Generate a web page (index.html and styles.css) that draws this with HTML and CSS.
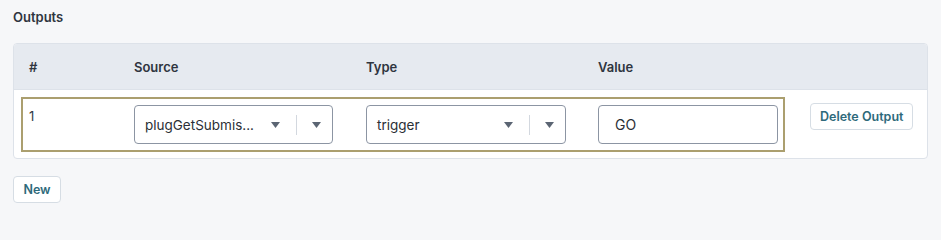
FILE: index.html
```html
<!DOCTYPE html>
<html>
<head>
<meta charset="utf-8">
<link rel="stylesheet" href="styles.css">
</head>
<body>
<div class="page">
  <h2 class="title">Outputs</h2>
  <div class="card">
    <div class="head">
      <div class="hcell">#</div>
      <div class="hcell">Source</div>
      <div class="hcell">Type</div>
      <div class="hcell">Value</div>
    </div>
    <div class="body">
      <div class="row">
        <div class="idx">1</div>
        <div class="select">
          <span class="sel-text">plugGetSubmis...</span>
          <svg class="arrow a1" width="9" height="6" viewBox="0 0 9 6"><path d="M0 0H9L4.5 6Z" fill="#5b6573"/></svg>
          <span class="sep"></span>
          <span class="drop"><svg class="arrow" width="9" height="6" viewBox="0 0 9 6"><path d="M0 0H9L4.5 6Z" fill="#5b6573"/></svg></span>
        </div>
        <div class="select">
          <span class="sel-text">trigger</span>
          <svg class="arrow a1" width="9" height="6" viewBox="0 0 9 6"><path d="M0 0H9L4.5 6Z" fill="#5b6573"/></svg>
          <span class="sep"></span>
          <span class="drop"><svg class="arrow" width="9" height="6" viewBox="0 0 9 6"><path d="M0 0H9L4.5 6Z" fill="#5b6573"/></svg></span>
        </div>
        <div class="input">GO</div>
      </div>
      <button class="btn del">Delete Output</button>
    </div>
  </div>
  <button class="btn new">New</button>
</div>
</body>
</html>
```

FILE: styles.css
```css
* { box-sizing: border-box; }
html, body { margin: 0; padding: 0; }
body {
  background: #f6f7f9;
  font-family: Inter, "Noto Sans", sans-serif;
  color: #2d3440;
  width: 941px;
  height: 219px;
  overflow: hidden;
}
.page {
  padding: 7px 13px 0 13px;
}
.title {
  margin: 0;
  font-size: 13px;
  font-weight: 600;
  line-height: 20px;
  color: #2f3540;
}
.card {
  margin-top: 16px;
  width: 915px;
  background: #fff;
  border: 1px solid #dde2e9;
  border-radius: 4px;
  overflow: hidden;
}
.head {
  display: grid;
  grid-template-columns: 105px 232px 232px 180px;
  height: 46px;
  align-items: center;
  padding-left: 15px;
  background: #e6eaf0;
  border-bottom: 1px solid #dde2e9;
}
.hcell {
  font-size: 13px;
  font-weight: 600;
  color: #2f3540;
}
.body {
  display: flex;
  align-items: flex-start;
  padding: 7px 0 6px 7px;
}
.row {
  display: grid;
  grid-template-columns: 105px 232px 232px 180px;
  padding: 6px 5px 6px 6px;
  border: 2px solid #ab9f6f;
}
.idx {
  font-size: 13px;
  line-height: 20px;
  padding-top: 1px;
  color: #333a44;
}
.select {
  display: flex;
  align-items: center;
  width: 199px;
  height: 39px;
  border: 1px solid #8c95a3;
  border-radius: 4px;
  padding-left: 10px;
  background: #fff;
}
.select:nth-of-type(3) { width: 200px; }
.sel-text {
  flex: 1;
  font-size: 13.5px;
  color: #2b2f36;
  white-space: nowrap;
}
.arrow { display: block; }
.a1 { margin-right: 16px; }
.sep {
  width: 1px;
  height: 20px;
  background: #d3d8df;
}
.drop {
  width: 35px;
  padding-left: 3px;
  display: flex;
  justify-content: center;
}
.input {
  width: 180px;
  height: 39px;
  border: 1px solid #8c95a3;
  border-radius: 4px;
  padding-left: 16px;
  font-size: 14px;
  line-height: 37px;
  color: #2b2f36;
  background: #fff;
}
.btn {
  font-family: Inter, "Noto Sans", sans-serif;
  font-size: 12.5px;
  font-weight: 600;
  color: #2e6a7b;
  background: #fff;
  border: 1px solid #d6dde4;
  border-radius: 4px;
  height: 27px;
  padding: 0 9px;
  white-space: nowrap;
  cursor: pointer;
}
.del {
  margin-top: 6px;
  margin-left: 25px;
  width: 103px;
}
.new {
  display: block;
  margin-top: 17px;
  width: 48px;
  padding: 0;
}
```
